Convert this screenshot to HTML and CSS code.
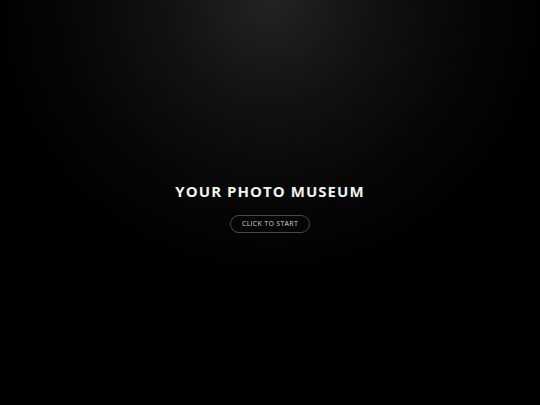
FILE: index.html
```html
<!DOCTYPE html>
<html>
  <head>
    <meta charset="utf-8" />
    <meta name="viewport" content="width=device-width, initial-scale=1.0" />
    <title>Your Photo Museum</title>
    <link rel="stylesheet" href="styles.css">
  </head>
  <body>
    <div class="intro">
      <h1 class="intro-title">YOUR PHOTO MUSEUM</h1>
      <button class="start-btn" type="button">CLICK TO START</button>
    </div>
  </body>
</html>
```

FILE: styles.css
```css
html,
body {
  margin: 0;
  height: 100%;
}

body {
  background: #000;
  font-family: "Open Sans", "Liberation Sans", sans-serif;
  color: #fff;
}

/* 开场画面 */
.intro {
  height: 100%;
  display: flex;
  flex-direction: column;
  align-items: center;
  justify-content: center;
  background: radial-gradient(
    circle 290px at 50% 0%,
    #232323 0%,
    #121212 35%,
    #060606 70%,
    #000 100%
  );
}

.intro-title {
  margin: 8px 0 0;
  font-size: 15px;
  line-height: 20px;
  font-weight: 700;
  letter-spacing: 1.05px;
  color: #f2f2f2;
}

.start-btn {
  margin-top: 14px;
  padding: 3px 11px;
  border: 1px solid #4a4a4a;
  border-radius: 10px;
  background: transparent;
  color: #d6d6d6;
  font-family: inherit;
  font-size: 7px;
  letter-spacing: 0.3px;
  line-height: 10px;
  cursor: pointer;
}
```
